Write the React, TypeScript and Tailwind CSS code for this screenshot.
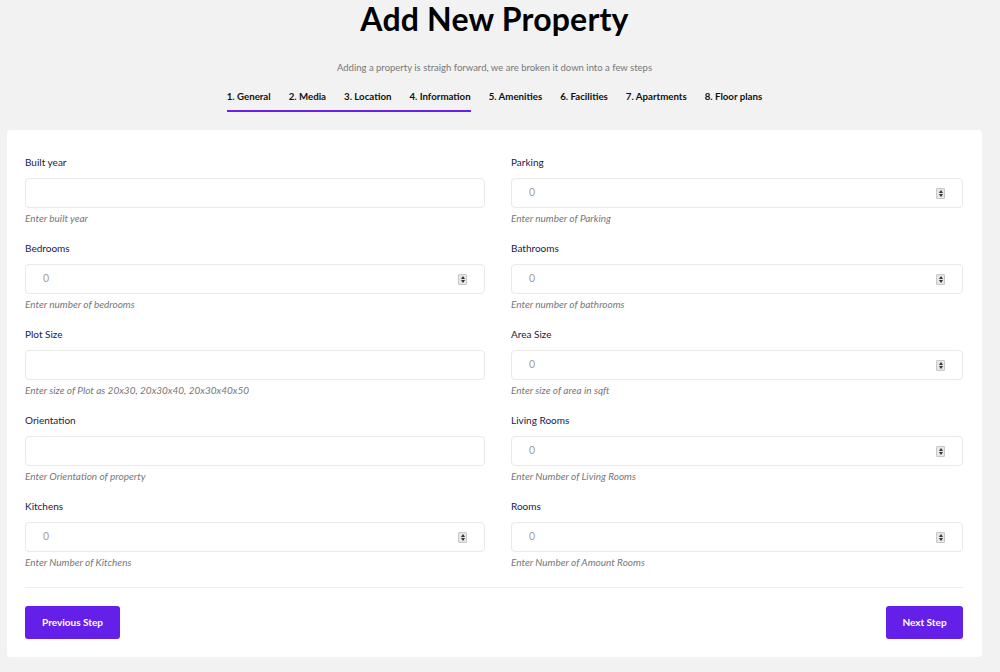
import React from "react";

const tabs = ["1. General", "2. Media", "3. Location", "4. Information", "5. Amenities", "6. Facilities", "7. Apartments", "8. Floor plans"];

type Field = { label: string; help: string; num: boolean };
const left: Field[] = [
  { label: "Built year", help: "Enter built year", num: false },
  { label: "Bedrooms", help: "Enter number of bedrooms", num: true },
  { label: "Plot Size", help: "Enter size of Plot as 20x30, 20x30x40, 20x30x40x50", num: false },
  { label: "Orientation", help: "Enter Orientation of property", num: false },
  { label: "Kitchens", help: "Enter Number of Kitchens", num: true },
];
const right: Field[] = [
  { label: "Parking", help: "Enter number of Parking", num: true },
  { label: "Bathrooms", help: "Enter number of bathrooms", num: true },
  { label: "Area Size", help: "Enter size of area in sqft", num: true },
  { label: "Living Rooms", help: "Enter Number of Living Rooms", num: true },
  { label: "Rooms", help: "Enter Number of Amount Rooms", num: true },
];

function Spinner() {
  return (
    <div className="flex flex-col items-center justify-center gap-[1px] w-[9px] h-[11px] bg-[#e6e6e6] border border-[#c8c8c8] rounded-[1px]">
      <div className="w-0 h-0 border-l-[2.5px] border-r-[2.5px] border-b-[3px] border-l-transparent border-r-transparent border-b-[#333]" />
      <div className="w-0 h-0 border-l-[2.5px] border-r-[2.5px] border-t-[3px] border-l-transparent border-r-transparent border-t-[#333]" />
    </div>
  );
}

function FieldBox({ f }: { f: Field }) {
  return (
    <div className="flex flex-col h-[86px]">
      <div className="text-[10px] text-[#1b2142] leading-[14px] h-[16px]">{f.label}</div>
      <div className="mt-[7px] h-[30px] border border-[#e9e9e9] rounded-[4px] bg-white flex items-center pl-[17px] pr-[17px]">
        {f.num && (
          <>
            <span className="text-[10.5px] text-[#a0a0a0] flex-1">0</span>
            <Spinner />
          </>
        )}
      </div>
      <div className="mt-[3px] text-[10px] italic text-[#777] leading-[14px]">{f.help}</div>
    </div>
  );
}

export default function App() {
  return (
    <div className="min-h-[672px] w-[1000px] bg-[#f2f2f2] font-['Lato',sans-serif] overflow-hidden">
      <div className="flex flex-col items-center pr-[11px]">
        <h1 className="text-[32px] font-bold text-black leading-[36px] mt-[1px] tracking-[0.2px]">Add New Property</h1>
        <p className="mt-[24px] text-[9.5px] text-[#777] leading-[14px]">Adding a property is straigh forward, we are broken it down into a few steps</p>
        <div className="mt-[14px] flex gap-[18px]">
          {tabs.map((t, i) => (
            <div key={t} className={`text-[9.7px] font-bold text-[#111] leading-[14px] pb-[7px] ${i < 4 ? "border-b-2 border-[#6a1fe6]" : "border-b-2 border-transparent"} ${i < 3 ? "pr-[18px] mr-[-18px]" : ""}`}>
              {t}
            </div>
          ))}
        </div>
      </div>
      <div className="mt-[18px] ml-[7px] w-[975px] h-[527px] bg-white rounded-[4px] px-[18px] pt-[25px]">
        <div className="grid grid-cols-[460px_452px] gap-x-[26px]">
          <div className="flex flex-col">
            {left.map((f) => (
              <FieldBox key={f.label} f={f} />
            ))}
          </div>
          <div className="flex flex-col">
            {right.map((f) => (
              <FieldBox key={f.label} f={f} />
            ))}
          </div>
        </div>
        <div className="w-[938px] h-[1px] bg-[#eeeeee] mt-[2px]" />
        <div className="w-[938px] flex justify-between mt-[18px]">
          <button className="w-[95px] h-[33px] bg-[#6420e8] text-white text-[10px] font-bold rounded-[3px]">Previous Step</button>
          <button className="w-[77px] h-[33px] bg-[#6420e8] text-white text-[10px] font-bold rounded-[3px]">Next Step</button>
        </div>
      </div>
    </div>
  );
}
